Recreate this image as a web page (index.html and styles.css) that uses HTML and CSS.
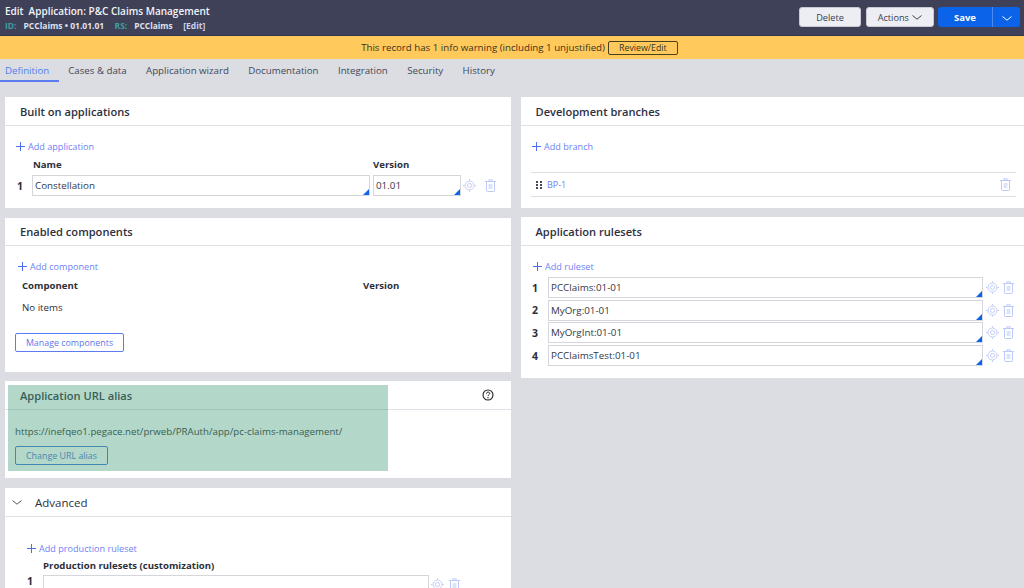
FILE: index.html
```html
<!DOCTYPE html>
<html lang="en">
<head>
    <meta charset="UTF-8">
    <title>Edit Application: P&amp;C Claims Management</title>
    <link rel="stylesheet" href="styles.css">
</head>
<body>
    <svg class="icon-defs" width="0" height="0">
        <symbol id="i-plus" viewBox="0 0 9 9"><path d="M4.5 0v9M0 4.5h9" fill="none" stroke="currentColor" stroke-width="1"/></symbol>
        <symbol id="i-target" viewBox="0 0 13 13"><g fill="none" stroke="currentColor" stroke-width="1"><circle cx="6.5" cy="6.5" r="4.5"/><circle cx="6.5" cy="6.5" r="2.1"/><path d="M6.5 0v1.6M6.5 11.4V13M0 6.5h1.6M11.4 6.5H13"/></g></symbol>
        <symbol id="i-trash" viewBox="0 0 11 13"><g fill="none" stroke="currentColor"><path d="M0 2.5h11M3.8 2.5V.8h3.4v1.7M1.5 2.5v9.2c0 .5.3.8.8.8h6.4c.5 0 .8-.3.8-.8V2.5"/></g><rect x="3.6" y="5" width="3.8" height="5" fill="currentColor" opacity=".55"/></symbol>
        <symbol id="i-chev" viewBox="0 0 10 5"><path d="M.5.5 5 4.2 9.5.5" fill="none" stroke="currentColor" stroke-width="1"/></symbol>
    </svg>

    <header class="topbar">
        <div class="topbar-info">
            <div class="record-title"><span class="edit-word">Edit</span>Application: P&amp;C Claims Management</div>
            <div class="record-meta">
                <span class="meta-key">ID:</span><span class="meta-id">PCClaims • 01.01.01</span>
                <span class="meta-key">RS:</span><span class="meta-rs">PCClaims</span><span class="meta-edit">[Edit]</span>
            </div>
        </div>
        <div class="topbar-actions">
            <button class="top-btn delete-btn">Delete</button>
            <button class="top-btn actions-btn">Actions <svg class="chev"><use href="#i-chev"/></svg></button>
            <div class="save-group">
                <button class="save-btn">Save</button>
                <button class="save-more"><svg class="chev"><use href="#i-chev"/></svg></button>
            </div>
        </div>
    </header>

    <div class="warning-bar">
        <span>This record has 1 info warning (including 1 unjustified)</span>
        <button class="review-btn">Review/Edit</button>
    </div>

    <nav class="tabs">
        <a class="tab active">Definition</a>
        <a class="tab">Cases &amp; data</a>
        <a class="tab">Application wizard</a>
        <a class="tab">Documentation</a>
        <a class="tab">Integration</a>
        <a class="tab">Security</a>
        <a class="tab">History</a>
    </nav>

    <main class="columns">
        <div class="column left-column">
            <section class="card built-card">
                <h2 class="card-title">Built on applications</h2>
                <a class="add-link built-add"><svg class="plus"><use href="#i-plus"/></svg>Add application</a>
                <div class="app-grid app-head"><span></span><b>Name</b><b>Version</b></div>
                <div class="app-grid">
                    <b class="row-num">1</b>
                    <div class="field">Constellation</div>
                    <div class="field">01.01</div>
                    <div class="row-icons"><svg class="i-target"><use href="#i-target"/></svg><svg class="i-trash"><use href="#i-trash"/></svg></div>
                </div>
            </section>

            <section class="card components-card">
                <h2 class="card-title">Enabled components</h2>
                <a class="add-link comp-add"><svg class="plus"><use href="#i-plus"/></svg>Add component</a>
                <div class="comp-grid"><b>Component</b><b>Version</b></div>
                <p class="no-items">No items</p>
                <button class="outline-btn">Manage components</button>
            </section>

            <section class="card alias-card">
                <h2 class="card-title">Application URL alias
                    <svg class="help-icon" viewBox="0 0 12 12"><circle cx="6" cy="6" r="5" fill="none" stroke="#222" stroke-width="1.1"/><path d="M4.4 4.7c0-2.1 3.3-2.1 3.3-.2 0 1.2-1.7 1.2-1.7 2.6" fill="none" stroke="#222"/><circle cx="6" cy="8.8" r=".7" fill="#222"/></svg>
                </h2>
                <p class="alias-url">https://inefqeo1.pegace.net/prweb/PRAuth/app/pc-claims-management/</p>
                <button class="outline-btn">Change URL alias</button>
                <div class="highlight"></div>
            </section>

            <section class="card advanced-card">
                <h2 class="card-title advanced-title"><svg class="adv-chev"><use href="#i-chev"/></svg>Advanced</h2>
                <a class="add-link prod-add"><svg class="plus"><use href="#i-plus"/></svg>Add production ruleset</a>
                <b class="prod-label">Production rulesets (customization)</b>
                <div class="prod-row">
                    <b class="row-num">1</b>
                    <div class="field no-corner"></div>
                    <div class="row-icons"><svg class="i-target"><use href="#i-target"/></svg><svg class="i-trash"><use href="#i-trash"/></svg></div>
                </div>
            </section>
        </div>

        <div class="column right-column">
            <section class="card branches-card">
                <h2 class="card-title">Development branches</h2>
                <a class="add-link branch-add"><svg class="plus"><use href="#i-plus"/></svg>Add branch</a>
                <div class="branch-row">
                    <span class="drag-dots"><i></i><i></i><i></i><i></i><i></i><i></i></span>
                    <a class="branch-link">BP-1</a>
                    <svg class="i-trash"><use href="#i-trash"/></svg>
                </div>
            </section>

            <section class="card rulesets-card">
                <h2 class="card-title">Application rulesets</h2>
                <a class="add-link ruleset-add"><svg class="plus"><use href="#i-plus"/></svg>Add ruleset</a>
                <div class="ruleset-row">
                    <b class="row-num">1</b><div class="field">PCClaims:01-01</div>
                    <div class="row-icons"><svg class="i-target"><use href="#i-target"/></svg><svg class="i-trash"><use href="#i-trash"/></svg></div>
                </div>
                <div class="ruleset-row">
                    <b class="row-num">2</b><div class="field">MyOrg:01-01</div>
                    <div class="row-icons"><svg class="i-target"><use href="#i-target"/></svg><svg class="i-trash"><use href="#i-trash"/></svg></div>
                </div>
                <div class="ruleset-row">
                    <b class="row-num">3</b><div class="field">MyOrgInt:01-01</div>
                    <div class="row-icons"><svg class="i-target"><use href="#i-target"/></svg><svg class="i-trash"><use href="#i-trash"/></svg></div>
                </div>
                <div class="ruleset-row">
                    <b class="row-num">4</b><div class="field">PCClaimsTest:01-01</div>
                    <div class="row-icons"><svg class="i-target"><use href="#i-target"/></svg><svg class="i-trash"><use href="#i-trash"/></svg></div>
                </div>
            </section>
        </div>
    </main>
</body>
</html>
```
FILE: styles.css
```css
* {
    box-sizing: border-box;
}
html, body {
    height: 588px;
    overflow: hidden;
}
body {
    margin: 0;
    background-color: #dcdde2;
    font-family: "Open Sans", sans-serif;
    font-size: 9.7px;
    color: #2b2f3a;
}
button {
    font-family: inherit;
    cursor: pointer;
}
b {
    font-weight: 700;
    font-size: 9.6px;
}
p {
    margin: 0;
}
.icon-defs {
    position: absolute;
}

/* header */
.topbar {
    display: flex;
    justify-content: space-between;
    height: 36px;
    padding: 5px 4px 0 5px;
    background-color: #3f4158;
    border-bottom: 1px solid #34364a;
}
.record-title {
    font-size: 10px;
    line-height: 13px;
    font-weight: 600;
    color: #f2f3f7;
}
.edit-word {
    margin-right: 5px;
}
.record-meta {
    display: flex;
    margin-top: 2px;
    font-size: 8.5px;
    line-height: 12px;
    font-weight: 700;
    color: #dfe2ee;
}
.meta-key {
    color: #3f9ea0;
}
.meta-id {
    margin-left: 7px;
    width: 91px;
    font-size: 8.5px;
}
.meta-rs {
    margin-left: 7px;
    width: 49px;
    font-size: 8.4px;
}
.meta-edit {
    color: #c9d3f0;
}
.topbar-actions {
    display: flex;
    height: 20px;
    margin-top: 2px;
}
.top-btn {
    height: 20px;
    padding: 0;
    margin-right: 5px;
    border: 1px solid #c9cbd4;
    border-radius: 3px;
    background-color: #eceef3;
    font-size: 9.2px;
    color: #3a3d4d;
}
.delete-btn {
    width: 62px;
}
.actions-btn {
    width: 68px;
    margin-right: 4px;
}
.chev {
    width: 10px;
    height: 5px;
    margin-left: 1px;
    vertical-align: 1px;
}
.save-group {
    display: flex;
    border-radius: 3px;
    overflow: hidden;
}
.save-btn, .save-more {
    height: 20px;
    padding: 0;
    border: none;
    background-color: #0a63e8;
    color: #fff;
}
.save-btn {
    width: 55px;
    font-size: 9.5px;
    font-weight: 700;
    border-right: 1px solid #4b8cf0;
}
.save-more {
    width: 27px;
}

/* warning */
.warning-bar {
    display: flex;
    justify-content: center;
    align-items: center;
    gap: 3px;
    height: 23px;
    padding-left: 15px;
    background-color: #ffc95c;
    font-size: 9.7px;
    color: #3a3320;
}
.review-btn {
    width: 70px;
    height: 14px;
    padding: 0;
    border: 1px solid #4d4021;
    border-radius: 2px;
    background: transparent;
    font-size: 8.8px;
    line-height: 12px;
    color: #3a3320;
}

/* tabs */
.tabs {
    display: flex;
    gap: 19.4px;
    height: 23px;
    padding-top: 4px;
    margin-bottom: 15px;
}
.tab {
    height: 19px;
    line-height: 15px;
    font-size: 9.7px;
    color: #41475a;
}
.tab.active {
    margin-right: -10.4px;
    padding: 0 10px 0 5px;
    color: #4d7cf0;
    border-bottom: 2px solid #5c7cf2;
}

/* columns */
.columns {
    display: grid;
    grid-template-columns: 506px 503px;
    gap: 10px;
    padding-left: 5px;
}
.column {
    display: flex;
    flex-direction: column;
}
.card {
    position: relative;
    background-color: #fff;
}
.card-title {
    display: flex;
    justify-content: space-between;
    align-items: center;
    height: 29px;
    margin: 0;
    padding: 0 17px 0 15px;
    border-bottom: 1px solid #dfe0e8;
    font-size: 11.1px;
    font-weight: 600;
    color: #2c3040;
}
.right-column .card-title {
    padding-left: 14.5px;
}
.add-link {
    display: flex;
    align-items: center;
    height: 14px;
    font-size: 9.1px;
    color: #6f82f5;
}
.plus {
    width: 9px;
    height: 9px;
    margin-right: 3px;
    color: #4f6ef0;
}
.row-num {
    font-size: 10.5px;
    color: #2b2f3a;
}
.field {
    position: relative;
    height: 21px;
    padding-left: 2px;
    border: 1px solid #d5d6dc;
    line-height: 19px;
    font-size: 9.8px;
    color: #333848;
}
.field::after {
    content: "";
    position: absolute;
    right: 0;
    bottom: 0;
    border-style: solid;
    border-width: 0 0 6px 6px;
    border-color: transparent transparent #0f63e6 transparent;
}
.field.no-corner::after {
    display: none;
}
.row-icons {
    display: flex;
    align-items: center;
    gap: 6px;
    color: #c4cdf8;
}
.i-target {
    width: 13px;
    height: 13px;
    color: #c4cdf8;
}
.i-trash {
    width: 11px;
    height: 13px;
    color: #bccafa;
}
.outline-btn {
    display: block;
    height: 19px;
    padding: 0;
    border: 1px solid #5c7cf2;
    border-radius: 2px;
    background: #fff;
    font-size: 8.9px;
    white-space: nowrap;
    color: #5f78e8;
}

/* built on */
.built-card {
    height: 111px;
}
.built-add {
    margin: 13px 0 0 11px;
}
.app-grid {
    display: grid;
    grid-template-columns: 27px 338px 3px 88px 40px;
    align-items: center;
}
.app-grid > :nth-child(2) {
    grid-column: 2;
}
.app-grid > :nth-child(3) {
    grid-column: 4;
}
.app-grid > :nth-child(4) {
    grid-column: 5;
    padding-left: 2px;
    gap: 9px;
}
.app-head {
    height: 15px;
    margin: 4px 0 3px;
}
.app-head b:first-of-type {
    padding-left: 1px;
}
.app-grid .row-num {
    padding-left: 12px;
}

/* components */
.components-card {
    height: 154px;
    margin-top: 10px;
}
.components-card .card-title {
    height: 28px;
}
.comp-add {
    margin: 13px 0 0 13px;
}
.comp-grid {
    display: grid;
    grid-template-columns: 341px 1fr;
    margin-top: 5px;
    padding-left: 17px;
    line-height: 15px;
}
.no-items {
    margin-top: 7px;
    padding-left: 17px;
    line-height: 15px;
}
.components-card .outline-btn {
    width: 109px;
    margin: 18px 0 0 10px;
}

/* alias */
.alias-card {
    height: 97px;
    margin-top: 9px;
}
.help-icon {
    width: 12px;
    height: 12px;
}
.alias-url {
    margin-top: 14px;
    padding-left: 10px;
    line-height: 15px;
    color: #2a2d36;
}
.alias-card .outline-btn {
    width: 93px;
    margin: 7px 0 0 10px;
    border-color: #3f78d8;
    color: #4a78d8;
}
.highlight {
    position: absolute;
    left: 3px;
    top: 4px;
    width: 380px;
    height: 86px;
    background-color: rgba(74, 160, 125, 0.42);
}

/* advanced */
.advanced-card {
    height: 120px;
    margin-top: 10px;
}
.advanced-title {
    justify-content: flex-start;
    padding-left: 7px;
    font-weight: 500;
    font-size: 11.5px;
}
.adv-chev {
    width: 10px;
    height: 5px;
    margin-right: 13px;
    color: #555a6a;
}
.prod-add {
    margin: 24px 0 0 22px;
}
.prod-label {
    display: block;
    margin: 4px 0 0 38px;
    line-height: 13px;
}
.prod-row {
    display: flex;
    align-items: flex-start;
    margin: 3px 0 0 22px;
}
.prod-row .row-num {
    width: 16px;
    line-height: 12px;
}
.prod-row .field {
    width: 386px;
}
.prod-row .row-icons {
    gap: 5px;
    margin: 3px 0 0 2px;
}

/* branches */
.branches-card {
    height: 111px;
}
.branch-add {
    margin: 13px 0 0 11px;
}
.branch-row {
    display: flex;
    align-items: center;
    width: 485px;
    height: 25px;
    margin: 19px 0 0 10px;
    padding: 0 5px;
    border-top: 1px solid #dcdde2;
    border-bottom: 1px solid #dcdde2;
}
.drag-dots {
    display: grid;
    grid-template-columns: 2px 2px;
    gap: 1px 2px;
    margin-right: 5px;
}
.drag-dots i {
    width: 2px;
    height: 2px;
    background-color: #444a5a;
}
.branch-link {
    flex: 1;
    font-size: 9px;
    color: #6f82f5;
}

/* rulesets */
.rulesets-card {
    height: 161px;
    margin-top: 9px;
}
.ruleset-add {
    margin: 13px 0 0 12px;
}
.ruleset-row {
    display: grid;
    grid-template-columns: 16px 435px 1fr;
    align-items: center;
    height: 21px;
    margin: 0 0 1.7px 11px;
}
.ruleset-add + .ruleset-row {
    margin-top: 4px;
}
.ruleset-row .row-icons {
    padding-left: 3px;
    gap: 4px;
}
```
